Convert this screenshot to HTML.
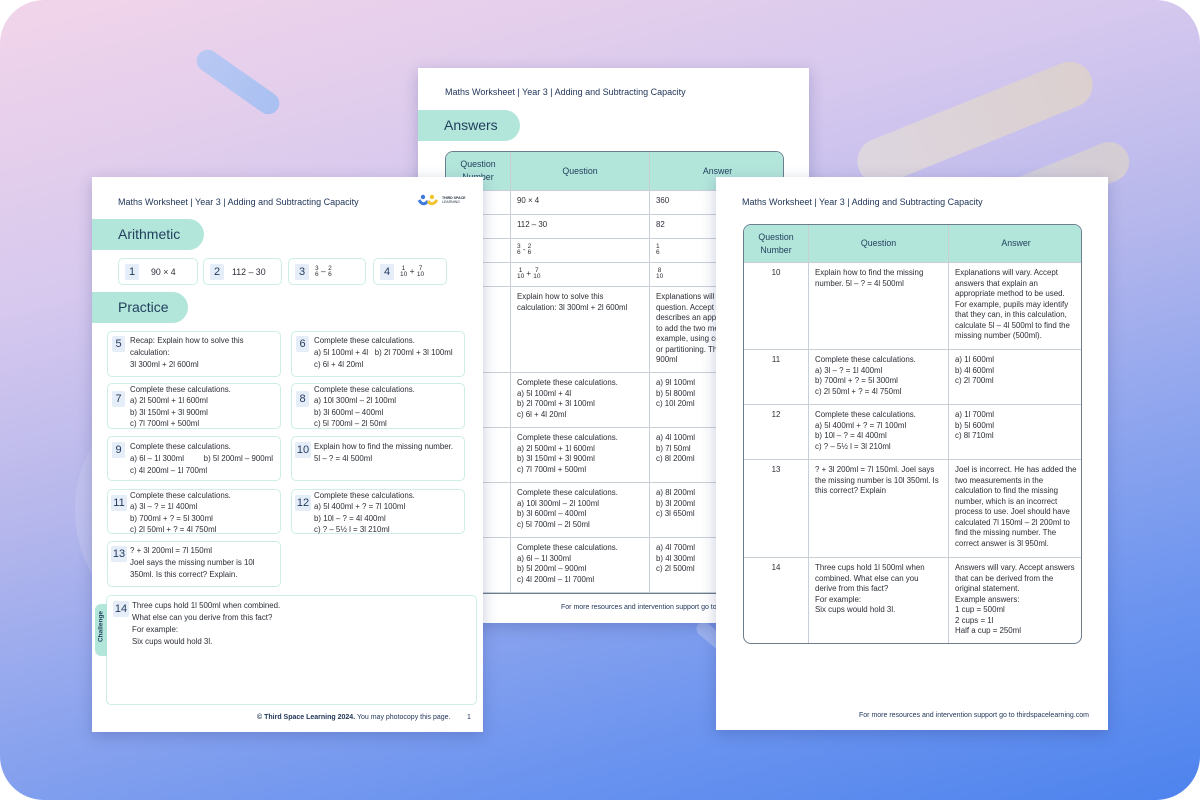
<!DOCTYPE html>
<html><head><meta charset="utf-8"><style>
*{margin:0;padding:0;box-sizing:border-box}
body{width:1200px;height:800px;background:#fff;position:relative;overflow:hidden;font-family:"Liberation Sans",sans-serif;color:#2b2f36}
.bg{position:absolute;left:0;top:0;width:1200px;height:800px;border-radius:44px;overflow:hidden;
background:linear-gradient(165deg,#f2d5ea 0%,#d6c8ee 28%,#b6b7ec 47%,#8ea5ee 65%,#6b94ef 82%,#4d83ee 100%)}
.pill{position:absolute;border-radius:40px}
.abs{position:absolute}
.page{position:absolute;background:#fff;box-shadow:0 4px 14px rgba(40,50,120,.25);overflow:hidden}
.hdr{position:absolute;font-size:9px;color:#22375a;white-space:nowrap}
.tag{position:absolute;background:#b3e6db;border-radius:0 16px 16px 0;color:#1f3e5c;font-size:14px;padding-left:26px;line-height:31px}
.box{position:absolute;border:1px solid #cdeee6;border-radius:5px;font-size:7.9px;line-height:12px;color:#2b2f36}
.num{position:absolute;background:#e5eef8;color:#243a5e;font-size:11px;text-align:center;border-radius:2px;line-height:16px}
.bt{position:absolute;white-space:nowrap}
table{border-collapse:separate;border-spacing:0;font-size:7.9px;line-height:10.5px;color:#2b2f36}
td,th{border-right:1px solid #c9cfd6;border-bottom:1px solid #c9cfd6;vertical-align:top;padding:5px 6px}
th{background:#b3e6db;font-weight:normal;color:#1f3e5c;font-size:8.8px;vertical-align:middle;text-align:center;line-height:13px}
td.c{text-align:center}
.foot{position:absolute;font-size:7px;color:#22375a;white-space:nowrap}
.fr{font-size:6.5px;display:inline-block;vertical-align:middle;text-align:center;line-height:6px}
.fr span{display:block}
</style></head><body>
<div class="bg">
 <div class="pill" style="left:190px;top:71px;width:96px;height:22px;background:linear-gradient(90deg,#b9c8f3,#a9c0f2);transform:rotate(35deg);border-radius:11px"></div>
 <div class="pill" style="left:850px;top:100px;width:250px;height:46px;background:linear-gradient(90deg,#ddd6e0,#dcd0cf);transform:rotate(-22deg);border-radius:23px"></div>
 <div class="pill" style="left:935px;top:172px;width:200px;height:40px;background:linear-gradient(90deg,#cfcde0,#d5cdd3);transform:rotate(-22deg);border-radius:20px"></div>
 <div class="abs" style="left:75px;top:380px;width:260px;height:260px;border-radius:50%;background:rgba(210,210,240,.35)"></div>
 <div class="abs" style="left:690px;top:640px;width:70px;height:14px;background:rgba(200,210,245,.45);transform:rotate(40deg);border-radius:7px"></div>
</div>

<!-- middle page -->
<div class="page" style="left:418px;top:68px;width:391px;height:555px">
 <div class="hdr" style="left:27px;top:19px">Maths Worksheet | Year 3 | Adding and Subtracting Capacity</div>
 <div class="tag" style="left:0;top:42px;width:102px">Answers</div>
 <div class="abs" style="left:27px;top:83px;width:339px;border:1px solid #6c7d8e;border-radius:8px 8px 0 0;overflow:hidden">
 <table style="width:339px">
  <tr style="height:39px"><th style="width:65px">Question<br>Number</th><th style="width:139px">Question</th><th style="border-right:none">Answer</th></tr>
  <tr style="height:24px"><td class="c"></td><td>90 × 4</td><td style="border-right:none">360</td></tr>
  <tr style="height:24px"><td></td><td>112 – 30</td><td style="border-right:none">82</td></tr>
  <tr style="height:24px"><td></td><td><span class="fr"><span>3</span><span>6</span></span> - <span class="fr"><span>2</span><span>6</span></span></td><td style="border-right:none"><span class="fr"><span>1</span><span>6</span></span></td></tr>
  <tr style="height:24px"><td></td><td><span class="fr"><span>1</span><span>10</span></span> + <span class="fr"><span>7</span><span>10</span></span></td><td style="border-right:none"><span class="fr"><span>8</span><span>10</span></span></td></tr>
  <tr style="height:86px"><td></td><td>Explain how to solve this<br>calculation: 3l 300ml + 2l 600ml</td><td style="border-right:none">Explanations will vary<br>question. Accept a<br>describes an appro<br>to add the two me<br>example, using co<br>or partitioning. Th<br>900ml</td></tr>
  <tr style="height:55px"><td></td><td>Complete these calculations.<br>a) 5l 100ml + 4l<br>b) 2l 700ml + 3l 100ml<br>c) 6l + 4l 20ml</td><td style="border-right:none">a) 9l 100ml<br>b) 5l 800ml<br>c) 10l 20ml</td></tr>
  <tr style="height:55px"><td></td><td>Complete these calculations.<br>a) 2l 500ml + 1l 600ml<br>b) 3l 150ml + 3l 900ml<br>c) 7l 700ml + 500ml</td><td style="border-right:none">a) 4l 100ml<br>b) 7l 50ml<br>c) 8l 200ml</td></tr>
  <tr style="height:55px"><td></td><td>Complete these calculations.<br>a) 10l 300ml – 2l 100ml<br>b) 3l 600ml – 400ml<br>c) 5l 700ml – 2l 50ml</td><td style="border-right:none">a) 8l 200ml<br>b) 3l 200ml<br>c) 3l 650ml</td></tr>
  <tr style="height:55px"><td></td><td>Complete these calculations.<br>a) 6l – 1l 300ml<br>b) 5l 200ml – 900ml<br>c) 4l 200ml – 1l 700ml</td><td style="border-right:none">a) 4l 700ml<br>b) 4l 300ml<br>c) 2l 500ml</td></tr>
 </table></div>
 <div class="foot" style="left:143px;top:536px">For more resources and intervention support go to thirdspacelearning.com</div>
</div>

<!-- left page -->
<div class="page" style="left:92px;top:177px;width:391px;height:555px">
 <div class="hdr" style="left:26px;top:20px">Maths Worksheet | Year 3 | Adding and Subtracting Capacity</div>
 <svg class="abs" style="left:326px;top:17px" width="20" height="14" viewBox="0 0 20 14"><circle cx="5" cy="3" r="2.2" fill="#3e7ae0"/><circle cx="14" cy="3" r="2.2" fill="#f2c530"/><path d="M1 6 Q5 13 10 7" stroke="#3e7ae0" stroke-width="3" fill="none"/><path d="M10 7 Q14 13 19 6" stroke="#f2c530" stroke-width="3" fill="none"/></svg>
 <div class="abs" style="left:350px;top:19px;font-size:3.5px;color:#234;line-height:4px;font-weight:bold">THIRD SPACE<br><span style="font-weight:normal">LEARNING</span></div>
 <div class="tag" style="left:0;top:42px;width:112px">Arithmetic</div>
 <div class="box" style="left:26px;top:81px;width:80px;height:27px"><div class="num" style="left:6px;top:5px;width:14px">1</div><div class="bt" style="left:32px;top:7px;font-size:8.8px">90 × 4</div></div>
 <div class="box" style="left:111px;top:81px;width:79px;height:27px"><div class="num" style="left:6px;top:5px;width:14px">2</div><div class="bt" style="left:28px;top:7px;font-size:8.8px">112 – 30</div></div>
 <div class="box" style="left:196px;top:81px;width:78px;height:27px"><div class="num" style="left:6px;top:5px;width:14px">3</div><div class="bt" style="left:26px;top:6px;font-size:8.5px"><span class="fr"><span>3</span><span>6</span></span> – <span class="fr"><span>2</span><span>6</span></span></div></div>
 <div class="box" style="left:281px;top:81px;width:74px;height:27px"><div class="num" style="left:6px;top:5px;width:14px">4</div><div class="bt" style="left:26px;top:6px;font-size:8.5px"><span class="fr"><span>1</span><span>10</span></span> + <span class="fr"><span>7</span><span>10</span></span></div></div>
 <div class="tag" style="left:0;top:115px;width:96px">Practice</div>

 <div class="box" style="left:15px;top:154px;width:174px;height:46px"><div class="num" style="left:4px;top:4px;width:13px">5</div><div class="bt" style="left:22px;top:3px">Recap: Explain how to solve this<br>calculation:<br>3l 300ml + 2l 600ml</div></div>
 <div class="box" style="left:199px;top:154px;width:174px;height:46px"><div class="num" style="left:4px;top:4px;width:13px">6</div><div class="bt" style="left:22px;top:3px">Complete these calculations.<br>a) 5l 100ml + 4l &nbsp;&nbsp;b) 2l 700ml + 3l 100ml<br>c) 6l + 4l 20ml</div></div>
 <div class="box" style="left:15px;top:206px;width:174px;height:46px"><div class="num" style="left:4px;top:7px;width:13px">7</div><div class="bt" style="left:22px;top:0px;line-height:11.3px">Complete these calculations.<br>a) 2l 500ml + 1l 600ml<br>b) 3l 150ml + 3l 900ml<br>c) 7l 700ml + 500ml</div></div>
 <div class="box" style="left:199px;top:206px;width:174px;height:46px"><div class="num" style="left:4px;top:7px;width:13px">8</div><div class="bt" style="left:22px;top:0px;line-height:11.3px">Complete these calculations.<br>a) 10l 300ml – 2l 100ml<br>b) 3l 600ml – 400ml<br>c) 5l 700ml – 2l 50ml</div></div>
 <div class="box" style="left:15px;top:259px;width:174px;height:45px"><div class="num" style="left:4px;top:5px;width:13px">9</div><div class="bt" style="left:22px;top:4px">Complete these calculations.<br>a) 6l – 1l 300ml &nbsp;&nbsp;&nbsp;&nbsp;&nbsp;&nbsp;&nbsp;&nbsp;b) 5l 200ml – 900ml<br>c) 4l 200ml – 1l 700ml</div></div>
 <div class="box" style="left:199px;top:259px;width:174px;height:45px"><div class="num" style="left:3px;top:5px;width:16px">10</div><div class="bt" style="left:22px;top:4px">Explain how to find the missing number.<br>5l – ? = 4l 500ml</div></div>
 <div class="box" style="left:15px;top:312px;width:174px;height:45px"><div class="num" style="left:3px;top:5px;width:16px">11</div><div class="bt" style="left:22px;top:0px;line-height:11.3px">Complete these calculations.<br>a) 3l – ? = 1l 400ml<br>b) 700ml + ? = 5l 300ml<br>c) 2l 50ml + ? = 4l 750ml</div></div>
 <div class="box" style="left:199px;top:312px;width:174px;height:45px"><div class="num" style="left:3px;top:5px;width:16px">12</div><div class="bt" style="left:22px;top:0px;line-height:11.3px">Complete these calculations.<br>a) 5l 400ml + ? = 7l 100ml<br>b) 10l – ? = 4l 400ml<br>c) ? – 5½ l = 3l 210ml</div></div>
 <div class="box" style="left:15px;top:364px;width:174px;height:46px"><div class="num" style="left:3px;top:4px;width:16px">13</div><div class="bt" style="left:22px;top:3px">? + 3l 200ml = 7l 150ml<br>Joel says the missing number is 10l<br>350ml. Is this correct? Explain.</div></div>
 <div class="box" style="left:14px;top:418px;width:371px;height:110px"><div class="num" style="left:6px;top:5px;width:16px">14</div><div class="bt" style="left:25px;top:4px">Three cups hold 1l 500ml when combined.<br>What else can you derive from this fact?<br>For example:<br>Six cups would hold 3l.</div></div>
 <div class="abs" style="left:3px;top:427px;width:12px;height:52px;background:#b3e6db;border-radius:6px 0 0 6px"></div>
 <div class="abs" style="left:-12px;top:446px;width:42px;font-size:6.5px;color:#1f3e5c;transform:rotate(-90deg);text-align:center;font-weight:bold">Challenge</div>
 <div class="foot" style="left:165px;top:537px"><b>© Third Space Learning 2024.</b> You may photocopy this page.</div>
 <div class="foot" style="left:375px;top:537px">1</div>
</div>

<!-- right page -->
<div class="page" style="left:716px;top:177px;width:392px;height:553px">
 <div class="hdr" style="left:26px;top:20px">Maths Worksheet | Year 3 | Adding and Subtracting Capacity</div>
 <div class="abs" style="left:27px;top:47px;width:339px;border:1px solid #6c7d8e;border-radius:8px;overflow:hidden">
 <table style="width:339px">
  <tr style="height:38px"><th style="width:65px">Question<br>Number</th><th style="width:140px">Question</th><th style="border-right:none">Answer</th></tr>
  <tr style="height:87px"><td class="c">10</td><td>Explain how to find the missing<br>number. 5l – ? = 4l 500ml</td><td style="border-right:none">Explanations will vary. Accept<br>answers that explain an<br>appropriate method to be used.<br>For example, pupils may identify<br>that they can, in this calculation,<br>calculate 5l – 4l 500ml to find the<br>missing number (500ml).</td></tr>
  <tr style="height:55px"><td class="c">11</td><td>Complete these calculations.<br>a) 3l – ? = 1l 400ml<br>b) 700ml + ? = 5l 300ml<br>c) 2l 50ml + ? = 4l 750ml</td><td style="border-right:none">a) 1l 600ml<br>b) 4l 600ml<br>c) 2l 700ml</td></tr>
  <tr style="height:55px"><td class="c">12</td><td>Complete these calculations.<br>a) 5l 400ml + ? = 7l 100ml<br>b) 10l – ? = 4l 400ml<br>c) ? – 5½ l = 3l 210ml</td><td style="border-right:none">a) 1l 700ml<br>b) 5l 600ml<br>c) 8l 710ml</td></tr>
  <tr style="height:98px"><td class="c">13</td><td>? + 3l 200ml = 7l 150ml. Joel says<br>the missing number is 10l 350ml. Is<br>this correct? Explain</td><td style="border-right:none">Joel is incorrect. He has added the<br>two measurements in the<br>calculation to find the missing<br>number, which is an incorrect<br>process to use. Joel should have<br>calculated 7l 150ml – 2l 200ml to<br>find the missing number. The<br>correct answer is 3l 950ml.</td></tr>
  <tr style="height:85px"><td class="c" style="border-bottom:none">14</td><td style="border-bottom:none">Three cups hold 1l 500ml when<br>combined. What else can you<br>derive from this fact?<br>For example:<br>Six cups would hold 3l.</td><td style="border-right:none;border-bottom:none">Answers will vary. Accept answers<br>that can be derived from the<br>original statement.<br>Example answers:<br>1 cup = 500ml<br>2 cups = 1l<br>Half a cup = 250ml</td></tr>
 </table></div>
 <div class="foot" style="left:143px;top:535px">For more resources and intervention support go to thirdspacelearning.com</div>
</div>
</body></html>
